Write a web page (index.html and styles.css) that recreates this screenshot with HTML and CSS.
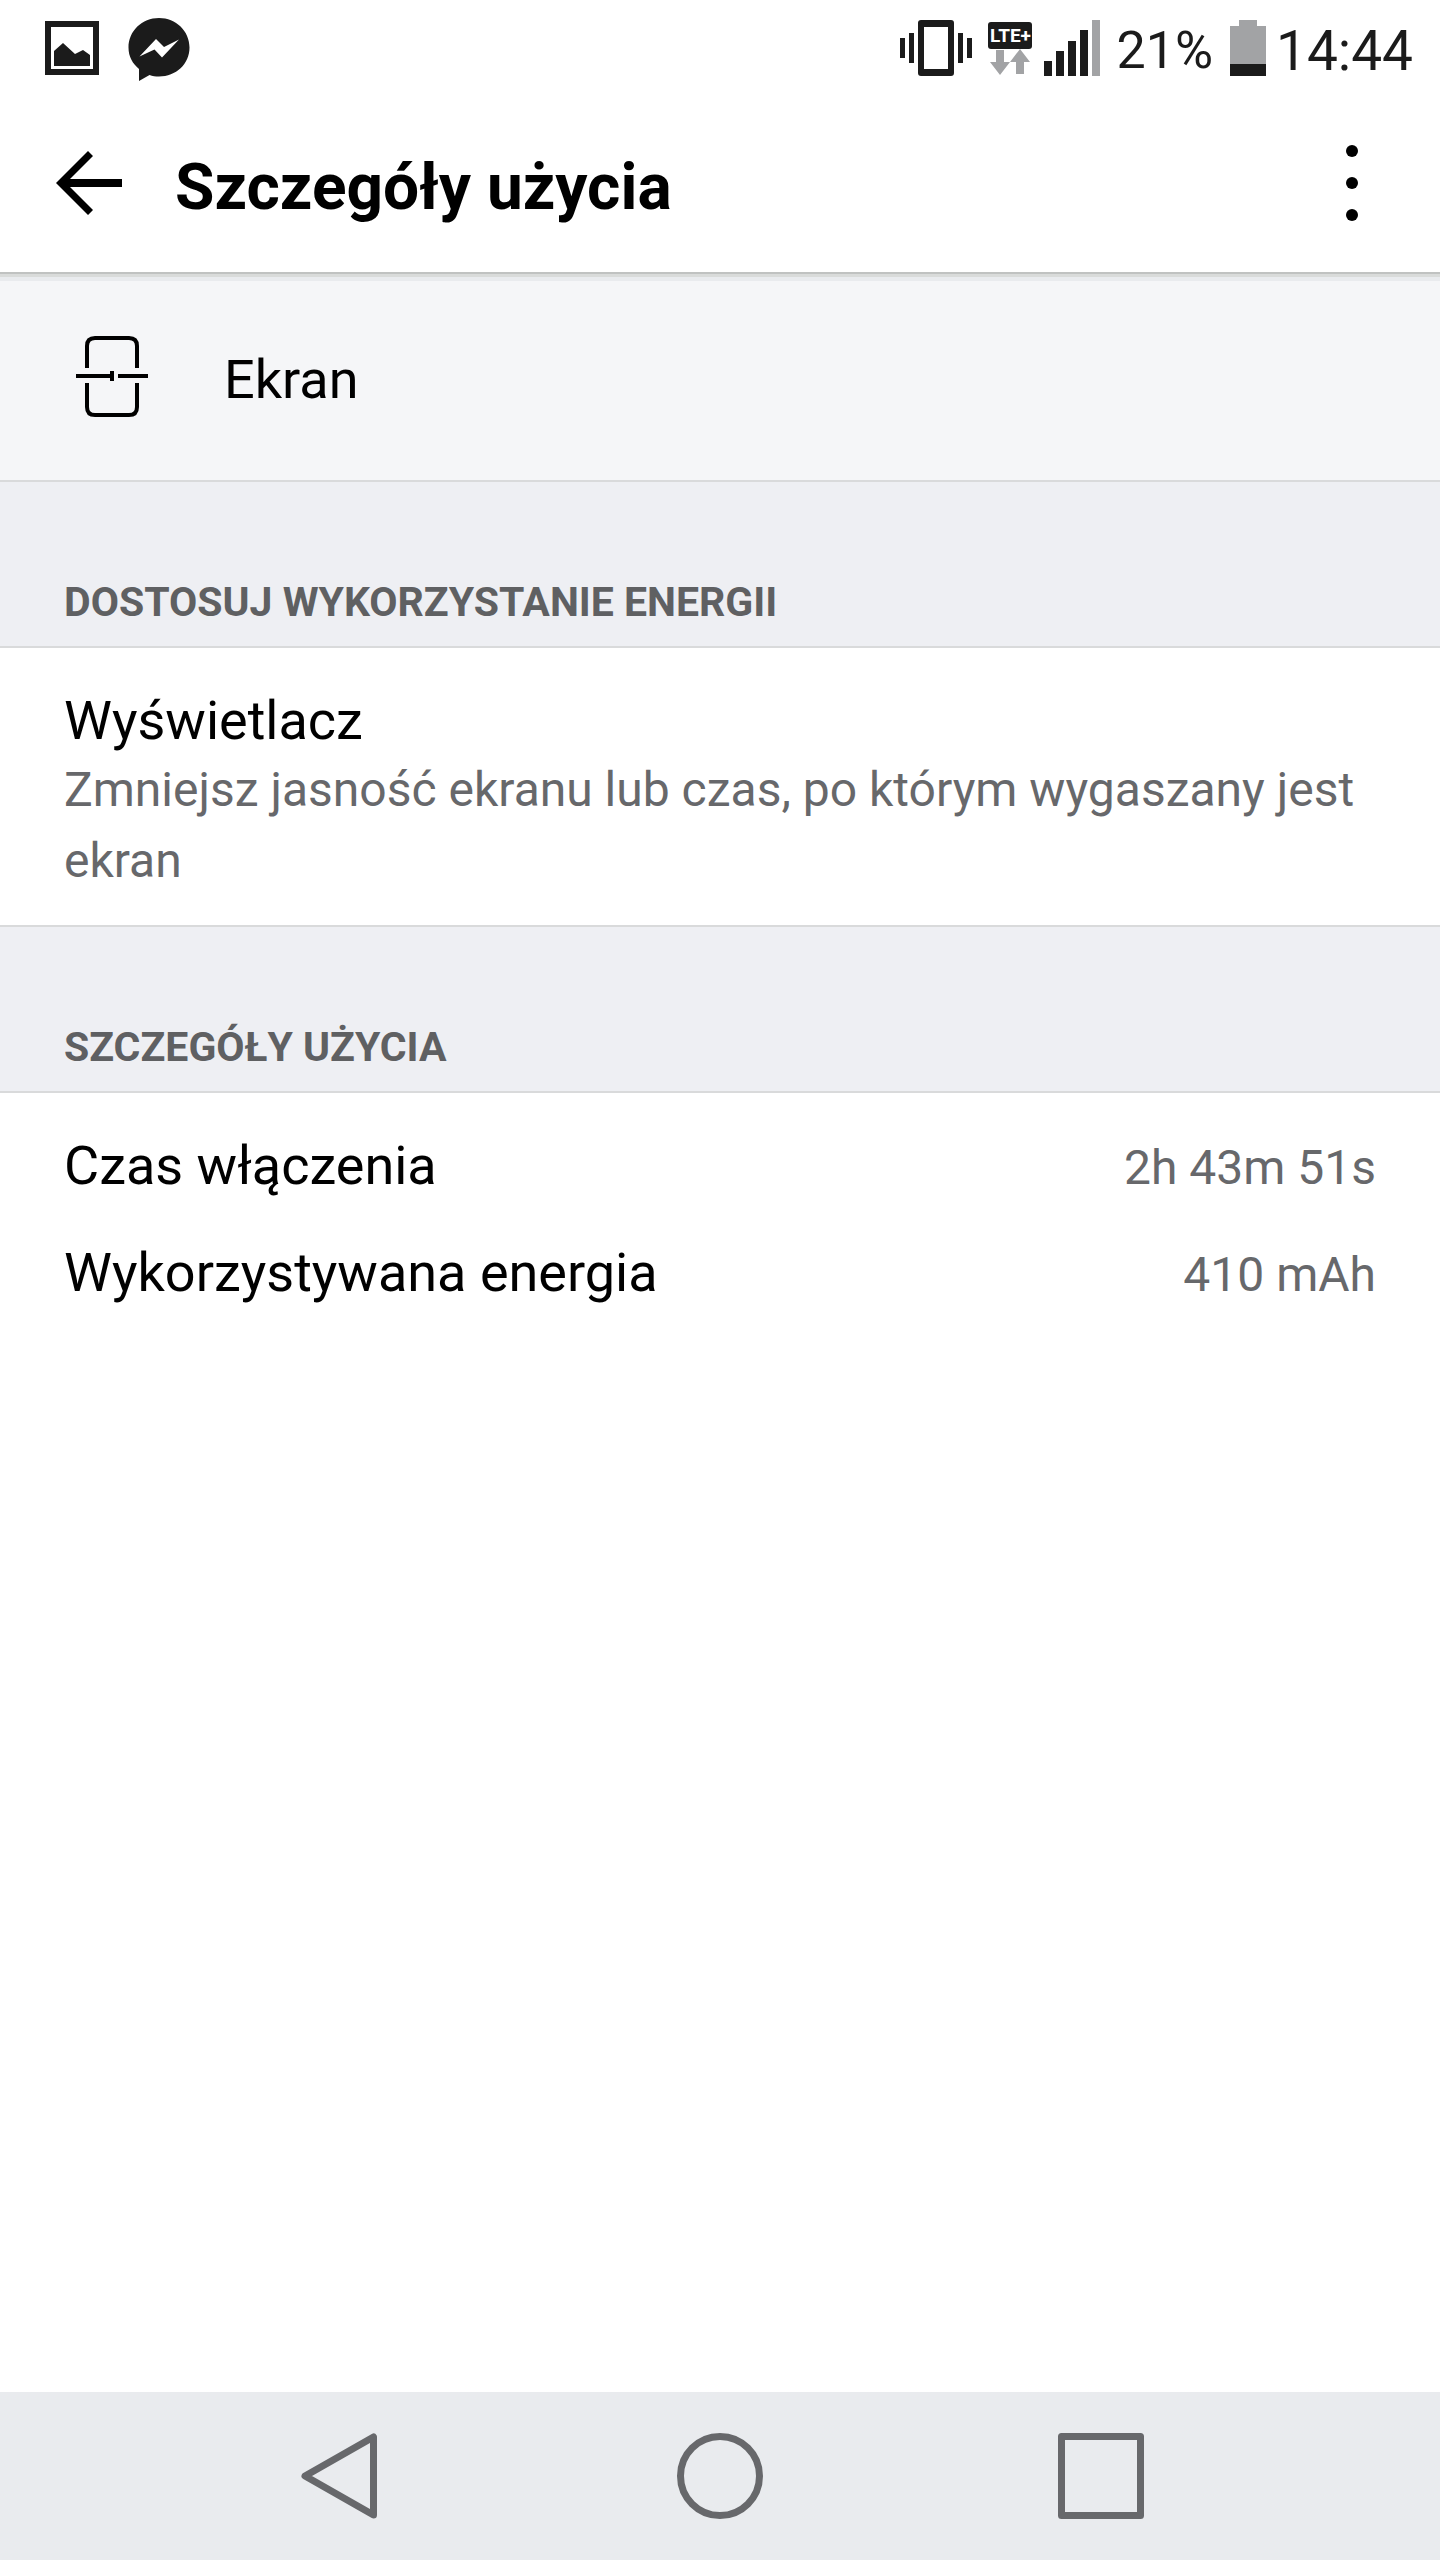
FILE: index.html
```html
<!DOCTYPE html>
<html lang="pl">
<head>
    <meta charset="UTF-8">
    <meta name="viewport" content="width=device-width, initial-scale=1.0">
    <title>Szczegóły użycia</title>
    <link rel="stylesheet" href="styles.css">
</head>
<body>
<div class="status-bar">
    <div class="notifications">
        <svg width="54" height="54" viewBox="0 0 54 54" aria-hidden="true">
            <path fill="#1b1b1b" fill-rule="evenodd" d="M0 0h54v54H0zM6 6v42h42V6z"/>
            <path fill="#1b1b1b" d="M9 30l9-8 12 11 8-4 7 5v11H9z"/>
        </svg>
        <svg width="62" height="66" viewBox="0 -3 62 66" aria-hidden="true">
            <path fill="#1b1b1b" d="M31 0C14 0 0.500 13 0.500 29.500c0 9 4 16 10.500 21.500V63l10.500-6c3 1 6 1.500 9.500 1.500C48 58.500 61.500 46 61.500 29.500S48 0 31 0z"/>
            <path fill="#fff" d="M11.500 38.500L28 21l8 8 15-7.500L34 39.500l-7.500-8z"/>
        </svg>
    </div>
    <div class="indicators">
        <svg class="vibrate" width="72" height="56" viewBox="0 0 72 56" aria-hidden="true">
            <path fill="#1b1b1b" d="M0 18h5v20H0zM9 13h5v30H9zM58 13h5v30h-5zM67 18h5v20h-5z"/>
            <path fill="#1b1b1b" fill-rule="evenodd" d="M21 0h30q3 0 3 3v50q0 3-3 3H21q-3 0-3-3V3q0-3 3-3zM24 7v42h24V7z"/>
        </svg>
        <div class="network">
            <span class="lte">LTE+</span>
            <svg width="40" height="26" viewBox="0 0 40 26" aria-hidden="true">
                <path fill="#a2a3a5" d="M6 1h8v12h6L10 26 0 13h6zM30 0l10 13h-6v12h-8V13h-6z"/>
            </svg>
        </div>
        <svg class="signal" width="56" height="56" viewBox="0 0 56 56" aria-hidden="true">
            <path fill="#1b1b1b" d="M0 41h8v15H0zM12 31h8v25h-8zM24 21h8v35h-8zM36 10h8v46h-8z"/>
            <path fill="#a2a3a5" d="M48 0h8v56h-8z"/>
        </svg>
        <span class="percent">21%</span>
        <svg class="battery" width="36" height="56" viewBox="0 0 36 56" aria-hidden="true">
            <path fill="#a2a3a5" d="M9 0h18v6h9v38H0V6h9z"/>
            <path fill="#1b1b1b" d="M0 44h36v12H0z"/>
        </svg>
        <span class="clock">14:44</span>
    </div>
</div>

<header class="toolbar">
    <button type="button" class="back" aria-label="Wstecz">
        <svg width="66" height="64" viewBox="0 0 66 64" aria-hidden="true">
            <path fill="#000" d="M32 0l5 5-23 23h52v8H14l23 23-5 5L0 32z"/>
        </svg>
    </button>
    <h1>Szczegóły użycia</h1>
    <button type="button" class="more" aria-label="Więcej opcji">
        <svg width="12" height="76" viewBox="0 0 12 76" aria-hidden="true">
            <circle cx="6" cy="6" r="6"/>
            <circle cx="6" cy="38" r="6"/>
            <circle cx="6" cy="70" r="6"/>
        </svg>
    </button>
</header>

<main>
    <div class="app-row">
        <svg width="72" height="82" viewBox="0 0 72 82" fill="none" stroke="#000" stroke-width="4" aria-hidden="true">
            <path d="M11 32V10q0-8 8-8h34q8 0 8 8v22M11 47v24q0 8 8 8h34q8 0 8-8V47"/>
            <path d="M0 40h36M42 40h30M36 35v10"/>
        </svg>
        <span class="app-name">Ekran</span>
    </div>

    <h2>DOSTOSUJ WYKORZYSTANIE ENERGII</h2>
    <a class="item" href="#">
        <span class="item-title">Wyświetlacz</span>
        <span class="item-summary">Zmniejsz jasność ekranu lub czas, po którym wygaszany jest ekran</span>
    </a>

    <h2>SZCZEGÓŁY UŻYCIA</h2>
    <dl class="details">
        <div class="detail">
            <dt>Czas włączenia</dt>
            <dd>2h 43m 51s</dd>
        </div>
        <div class="detail">
            <dt>Wykorzystywana energia</dt>
            <dd>410 mAh</dd>
        </div>
    </dl>
</main>

<nav class="nav-bar">
    <button type="button" aria-label="Wstecz">
        <svg width="88" height="88" viewBox="0 0 88 88" aria-hidden="true">
            <path d="M78.500 5v78L10 44z"/>
        </svg>
    </button>
    <button type="button" aria-label="Ekran główny">
        <svg width="88" height="88" viewBox="0 0 88 88" aria-hidden="true">
            <circle cx="44" cy="44" r="39.500"/>
        </svg>
    </button>
    <button type="button" aria-label="Ostatnie aplikacje">
        <svg width="88" height="88" viewBox="0 0 88 88" aria-hidden="true">
            <rect x="4.500" y="4.500" width="79" height="79"/>
        </svg>
    </button>
</nav>
</body>
</html>
```

FILE: styles.css
```css
* {
    box-sizing: border-box;
    margin: 0;
    padding: 0;
}

body {
    font-family: Roboto, "Noto Sans", sans-serif;
    display: flex;
    flex-direction: column;
    min-height: 100vh;
    background: #fff;
    color: #000;
}

svg {
    display: block;
    flex-shrink: 0;
}

button {
    display: flex;
    background: none;
    border: none;
    cursor: pointer;
}

/* status bar */
.status-bar {
    display: flex;
    justify-content: space-between;
    align-items: center;
    height: 96px;
    padding: 0 27px 0 45px;
    color: #1b1b1b;
}

.notifications {
    display: flex;
    align-items: center;
    gap: 29px;
}

.indicators {
    display: flex;
    align-items: center;
}

.vibrate {
    margin-right: 16px;
}

.network {
    display: flex;
    flex-direction: column;
    align-items: center;
    margin-right: 12px;
}

.lte {
    width: 44px;
    border-radius: 3px;
    background: #1b1b1b;
    color: #fff;
    font-size: 19px;
    font-weight: 700;
    line-height: 27px;
    text-align: center;
}

.percent,
.clock {
    padding-top: 5px;
}

.percent {
    margin: 0 17px 0 16px;
    font-size: 52px;
}

.clock {
    margin-left: 10px;
    font-size: 55px;
}

/* toolbar */
.toolbar {
    position: relative;
    display: flex;
    align-items: center;
    height: 176px;
    padding: 0 82px 2px 56px;
    background: #fff;
    box-shadow: 0 2px #c0c2c1, 0 5px #d9dbda, 0 9px #e9ebee;
}

.toolbar h1 {
    flex: 1;
    padding: 8px 0 0 53px;
    font-size: 64px;
    font-weight: 700;
}

/* content */
main {
    flex: 1;
}

.app-row {
    display: flex;
    align-items: center;
    height: 210px;
    padding: 2px 76px 0;
    background: #f5f6f8;
    border-bottom: 2px solid #d9dadb;
}

.app-name {
    padding: 4px 0 0 76px;
    font-size: 54px;
}

h2 {
    padding: 96px 64px 20px;
    background: #eeeff3;
    border-bottom: 2px solid #d9dadb;
    color: #5f6062;
    font-size: 41px;
    font-weight: 700;
    line-height: 48px;
}

.item {
    display: block;
    padding: 40px 64px 29px;
    border-bottom: 2px solid #d9dadb;
    color: #000;
    text-decoration: none;
}

.item-title,
.item-summary {
    display: block;
}

.item-title,
.detail dt {
    font-size: 54px;
    line-height: 66px;
}

.item-summary {
    color: #67686b;
    font-size: 48px;
    line-height: 71px;
}

.details {
    display: flex;
    flex-direction: column;
    gap: 41px;
    padding: 40px 64px;
}

.detail {
    display: flex;
    justify-content: space-between;
    align-items: baseline;
}

.detail dd {
    color: #67686b;
    font-size: 48px;
}

/* navigation bar */
.nav-bar {
    display: flex;
    justify-content: center;
    align-items: center;
    gap: 293px;
    height: 168px;
    background: #e9ebee;
}

.nav-bar svg {
    fill: none;
    stroke: #67686b;
    stroke-width: 7px;
    stroke-linejoin: round;
}
```
